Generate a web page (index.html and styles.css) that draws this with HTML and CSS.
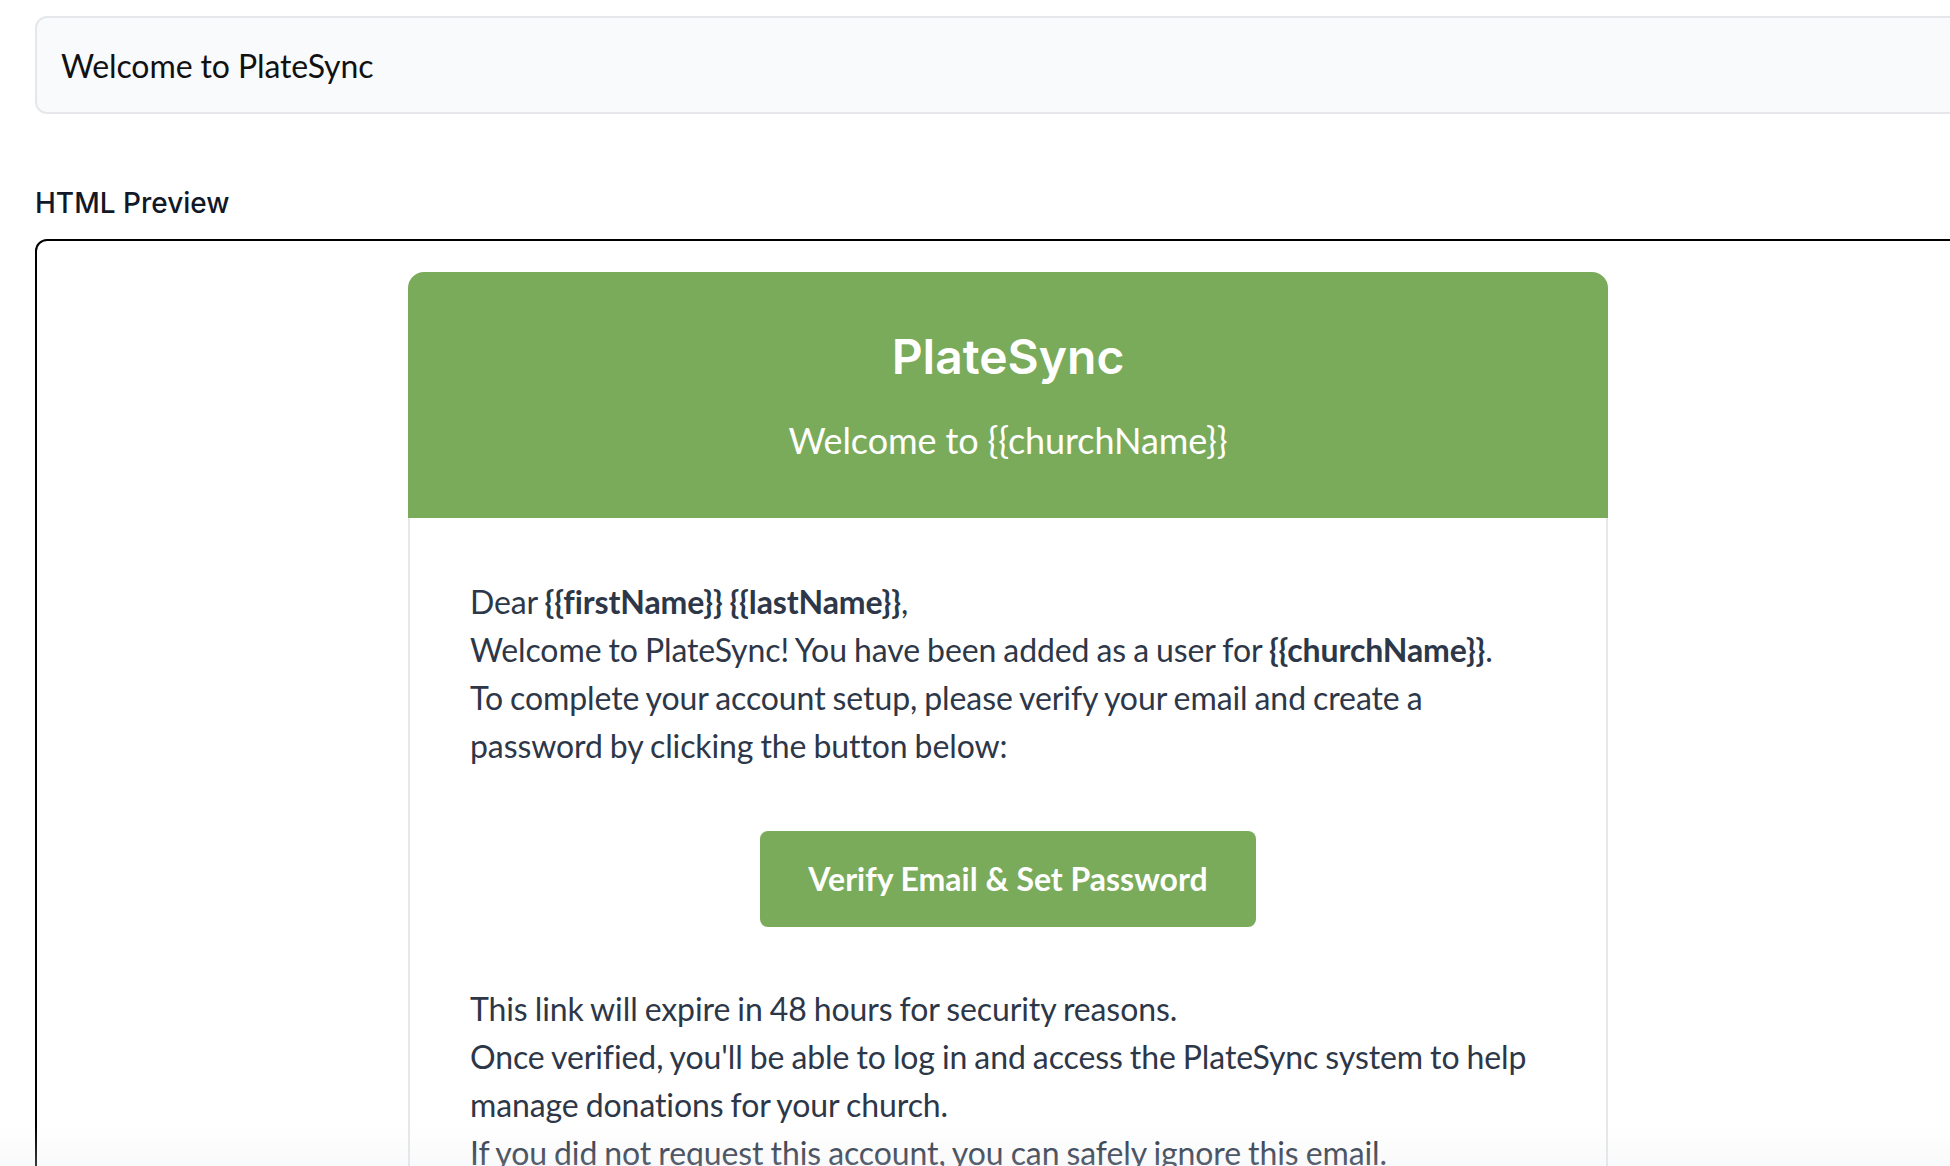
FILE: index.html
```html
<!DOCTYPE html>
<html lang="en">
<head>
<meta charset="utf-8">
<title>Email Template</title>
<link rel="stylesheet" href="styles.css">
</head>
<body>
<div class="page">
  <div class="field">
    <label class="field-label">Subject</label>
    <div class="input">Welcome to PlateSync</div>
  </div>
  <div class="field preview-field">
    <div class="field-label">HTML Preview</div>
    <div class="preview">
      <div class="email">
        <div class="email-header">
          <h1 class="brand">PlateSync</h1>
          <p class="tagline">Welcome to {{churchName}}</p>
        </div>
        <div class="email-body">
          <p>Dear <strong>{{firstName}} {{lastName}}</strong>,</p>
          <p>Welcome to PlateSync! You have been added as a user for <strong>{{churchName}}</strong>.</p>
          <p>To complete your account setup, please verify your email and create a password by clicking the button below:</p>
          <div class="cta-row"><a class="cta">Verify Email &amp; Set Password</a></div>
          <p>This link will expire in 48 hours for security reasons.</p>
          <p>Once verified, you'll be able to log in and access the PlateSync system to help manage donations for your church.</p>
          <p>If you did not request this account, you can safely ignore this email.</p>
        </div>
      </div>
    </div>
  </div>
</div>
<div class="bottom-fade"></div>
</body>
</html>
```

FILE: styles.css
```css
html, body {
  margin: 0;
  padding: 0;
  background: #ffffff;
  overflow: hidden;
}

.page {
  width: 1946px;
  margin-top: -40px;
  padding-left: 35px;
  font-family: Inter, "Noto Sans", sans-serif;
}

.field-label {
  display: block;
  font-family: Inter, sans-serif;
  font-size: 28px;
  font-weight: 500;
  line-height: 40px;
  color: #111827;
  margin-bottom: 16px;
}

.input {
  box-sizing: border-box;
  height: 98px;
  display: flex;
  align-items: center;
  padding-left: 24px;
  background: #f9fafb;
  border: 2px solid #e5e7eb;
  border-radius: 12px;
  font-family: Lato, sans-serif;
  font-size: 32px;
  letter-spacing: -0.1px;
  color: #111111;
}

.preview-field {
  margin-top: 69px;
}

.preview {
  border: 2px solid #000000;
  border-radius: 12px;
  padding: 31px;
}

.email {
  width: 1200px;
  margin: 0 auto;
  font-family: Lato, sans-serif;
}

.email-header {
  background: #7aab5a;
  border-radius: 16px 16px 0 0;
  padding: 56px 20px 56px;
  text-align: center;
  color: #ffffff;
}

.brand {
  margin: 0;
  font-family: Inter, sans-serif;
  font-weight: 600;
  font-size: 48px;
  line-height: 58px;
}

.tagline {
  margin: 33px 0 0;
  font-size: 36px;
  line-height: 43px;
  letter-spacing: -0.1px;
}

.email-body {
  border-left: 2px solid #e5e7eb;
  border-right: 2px solid #e5e7eb;
  padding: 60px;
  color: #2d3748;
  font-size: 32px;
  line-height: 48px;
  letter-spacing: -0.1px;
  word-spacing: -1px;
}

.email-body p {
  margin: 0;
}

.email-body strong {
  font-weight: 700;
}

.cta-row {
  text-align: center;
  margin: 61px 0 58px;
}

.cta {
  display: inline-block;
  background: #7aab5a;
  color: #ffffff;
  font-weight: 700;
  font-size: 32px;
  line-height: 38px;
  letter-spacing: 0;
  word-spacing: 0;
  padding: 29px 48px;
  border-radius: 8px;
  text-decoration: none;
}

.bottom-fade {
  position: fixed;
  left: 0;
  right: 0;
  bottom: 0;
  height: 40px;
  background: linear-gradient(to bottom, rgba(230, 232, 236, 0), rgba(230, 232, 236, 0.25));
  pointer-events: none;
}
```
